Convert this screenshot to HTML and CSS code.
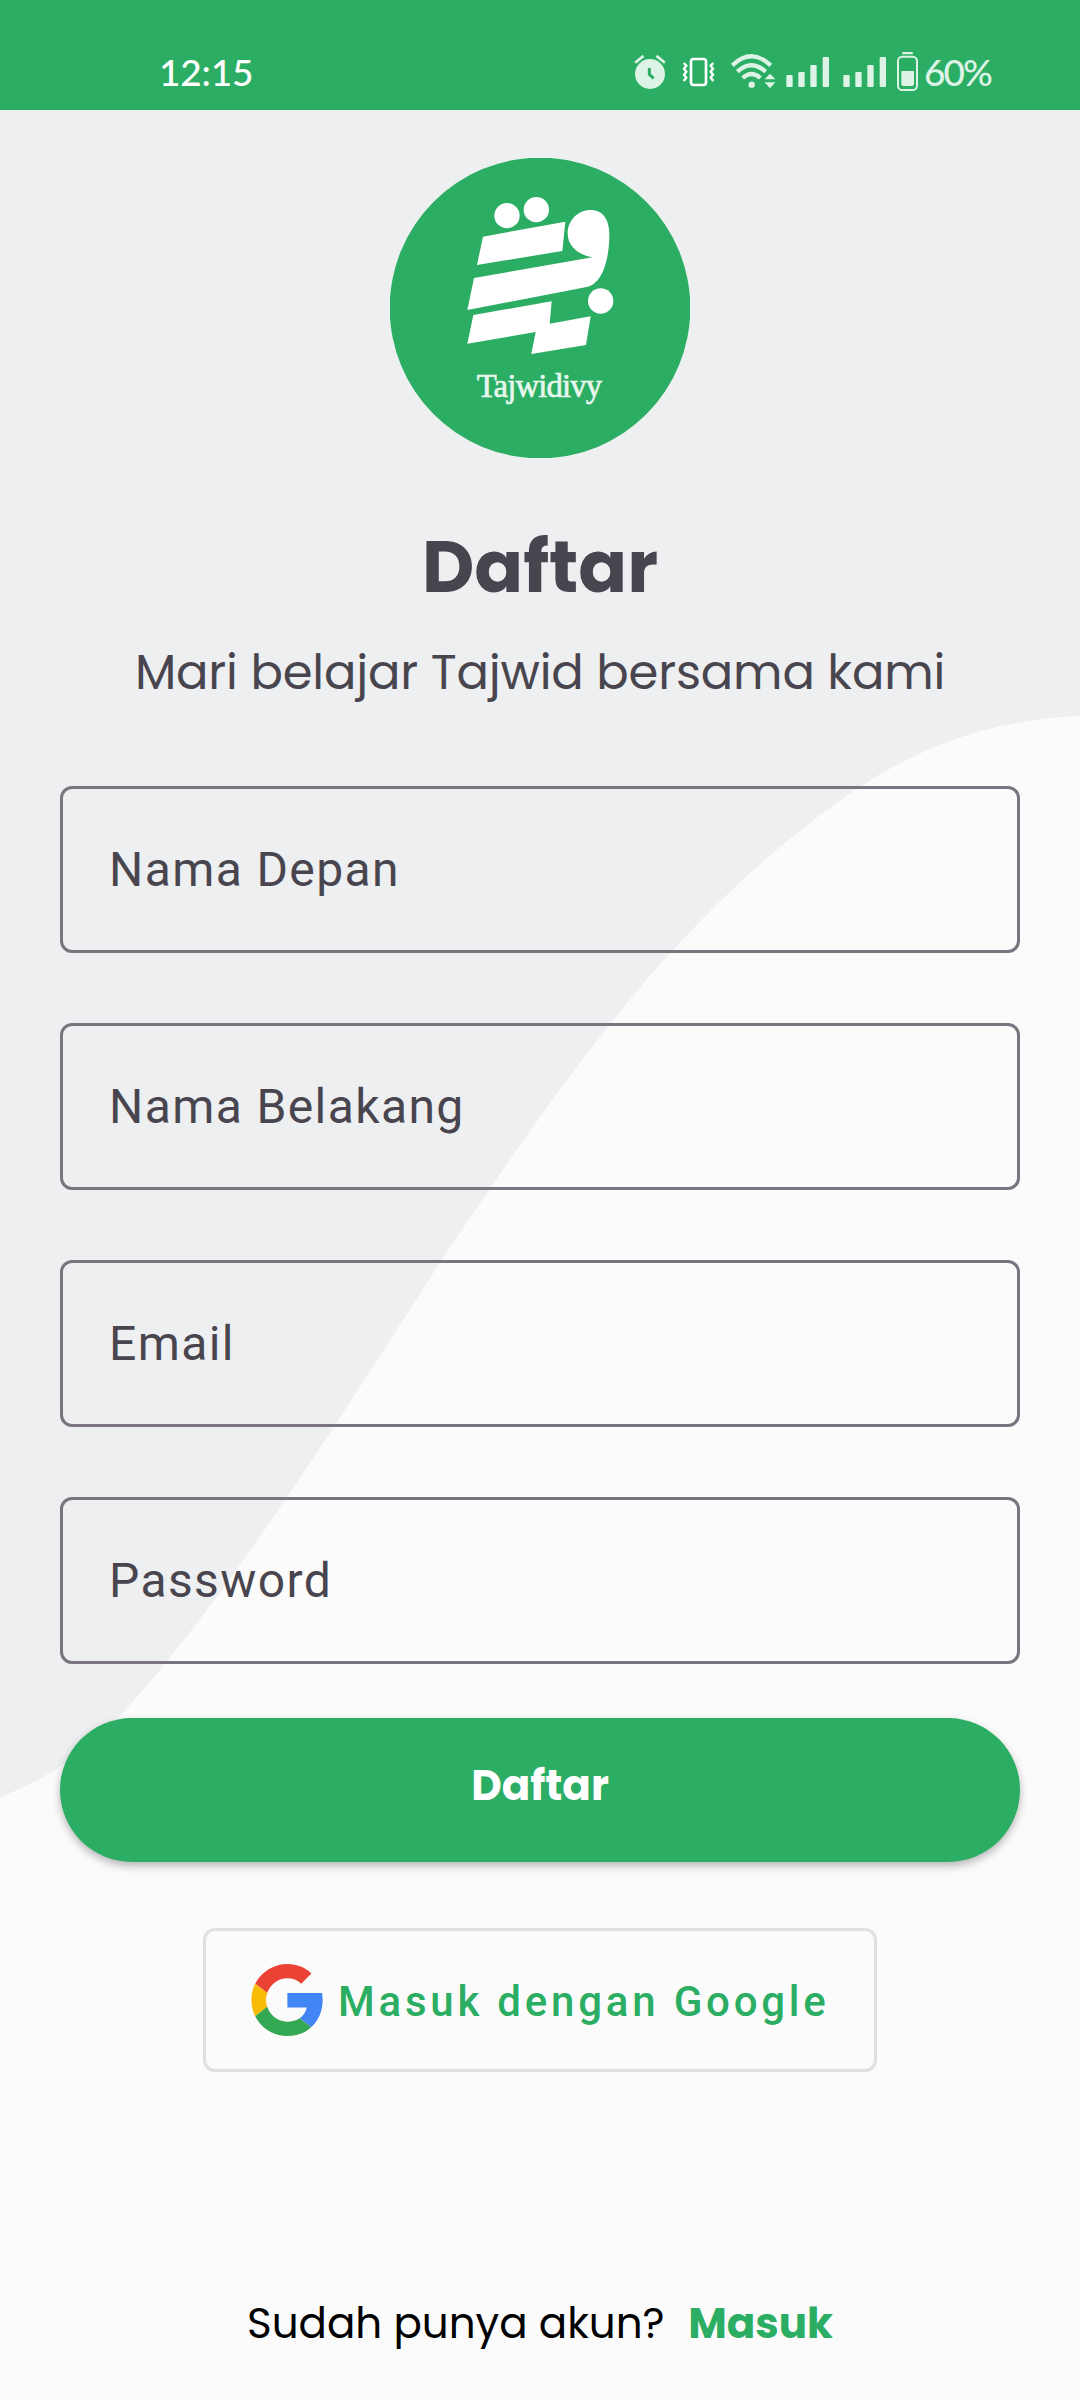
FILE: index.html
```html
<!DOCTYPE html>
<html lang="id">
<head>
<meta charset="utf-8">
<title>Daftar - Tajwidivy</title>
<link rel="stylesheet" href="styles.css">
</head>
<body>
<header class="status">
  <span class="time">12:15</span>
  <div class="status-icons">
    <svg class="alarm" viewBox="42 36 96 117" fill="#dcf3e6"><circle cx="90" cy="102" r="45"/><path d="M43 65L68 44l5 7-25 20zM137 65l-25-21-5 7 25 20z"/><path d="M88 84v19l13 12" fill="none" stroke="#2bae63" stroke-width="9"/></svg>
    <svg class="vibrate" viewBox="186 36 99 117" fill="none" stroke="#fff"><rect x="213" y="57" width="45" height="78" rx="8" stroke-width="8"/><path d="M191 69l8 8-7 9 7 9-7 9 7 9-8 10M280 69l-8 8 7 9-7 9 7 9-7 9 8 10" stroke-width="7"/></svg>
    <svg class="wifi" viewBox="330 36 138 117" fill="none" stroke="#dcf3e6" stroke-width="13"><path d="M337 76Q394 22 452 76M352 95Q394 56 437 95M368 114Q394 90 421 114"/><circle cx="395" cy="134" r="9.500" fill="#dcf3e6" stroke="none"/><path d="M434 118l16-17 16 17zM434 127l16 18 16-18z" fill="#dcf3e6" stroke="none"/></svg>
    <svg class="signal" viewBox="498 36 132 117" fill="#dcf3e6"><rect x="499" y="105" width="19" height="36" rx="3"/><rect x="535" y="96" width="19" height="45" rx="3"/><rect x="571" y="75" width="19" height="66" rx="3"/><rect x="608" y="51" width="19" height="90" rx="3"/></svg>
    <svg class="signal second" viewBox="498 36 132 117" fill="#dcf3e6"><rect x="499" y="105" width="19" height="36" rx="3"/><rect x="535" y="96" width="19" height="45" rx="3"/><rect x="571" y="75" width="19" height="66" rx="3"/><rect x="608" y="51" width="19" height="90" rx="3"/></svg>
    <svg class="battery" viewBox="828 36 69 117" fill="#dcf3e6"><rect x="846" y="36" width="33" height="7" rx="3"/><rect x="834" y="50" width="57" height="100" rx="13" fill="none" stroke="#dcf3e6" stroke-width="6"/><path d="M844 93h38v39q0 6-6 6h-26q-6 0-6-6z"/></svg>
    <span class="percent">60%</span>
  </div>
</header>
<main class="screen">
  <svg class="backdrop" viewBox="0 110 1080 2290"><path d="M0 110H1080V716C1005 718 930 741 861 786C795 830 732 886 671 952C590 1042 515 1150 441 1261C330 1433 225 1602 118 1718C85 1754 45 1780 0 1797Z" fill="#edeff1"/></svg>
  <svg class="logo" viewBox="30 24 900 900">
    <circle cx="480" cy="474" r="451" fill="#2bae63"/>
    <g fill="#fff">
      <circle cx="381" cy="197" r="38"/><circle cx="469" cy="179" r="38"/><circle cx="662" cy="453" r="38"/>
      <path d="M309 260L556 215 547 303 291 345Z"/>
      <path d="M282 384L638 322C590 314 563 286 563 250C563 211 594 180 632 180C668 180 688 207 688 254C688 335 664 403 620 411L262 480Z"/>
      <path d="M280 495L515 454 509 521 632 499 618 585 454 612 467 546 262 581Z"/>
    </g>
    <text class="logo-text" x="290" y="742" textLength="376">Tajwidivy</text>
  </svg>
  <h1 class="title">Daftar</h1>
  <p class="subtitle">Mari belajar Tajwid bersama kami</p>
  <form class="form">
    <div class="field">Nama Depan</div>
    <div class="field">Nama Belakang</div>
    <div class="field">Email</div>
    <div class="field">Password</div>
    <button class="submit" type="button">Daftar</button>
  </form>
  <button class="google" type="button">
    <svg class="google-icon" viewBox="0 0 47.500 48"><path fill="#ea4335" d="M24 9.500c3.540 0 6.710 1.220 9.210 3.600l6.850-6.850C35.900 2.380 30.470 0 24 0 14.620 0 6.510 5.380 2.560 13.220l7.980 6.190C12.430 13.720 17.740 9.500 24 9.500z"/><path fill="#4285f4" d="M47.500 24.550c0-1.570-.15-3.900-.38-5.200H24v9.670h12.940c-.58 2.960-2.260 5.480-4.780 7.180l7.730 6c4.510-4.180 7.610-10.360 7.610-17.650z"/><path fill="#fbbc05" d="M10.530 28.590c-.48-1.450-.76-2.990-.76-4.590s.27-3.140.76-4.590l-7.980-6.190C.92 16.460 0 20.120 0 24s.92 7.540 2.560 10.780l7.970-6.190z"/><path fill="#34a853" d="M24 48c6.480 0 11.930-2.130 15.890-5.810l-7.730-6c-2.150 1.450-4.920 2.300-8.160 2.300-6.260 0-11.570-4.220-13.470-9.910l-7.980 6.190C6.510 42.620 14.620 48 24 48z"/></svg>
    <span class="google-label">Masuk dengan Google</span>
  </button>
  <p class="login"><span class="question">Sudah punya akun?</span><a class="login-link">Masuk</a></p>
</main>
</body>
</html>
```
FILE: styles.css
```css
* { box-sizing: border-box; }
body { margin: 0; width: 1080px; height: 2400px; background: #fbfbfb; font-family: Poppins, Inter, sans-serif; color: #49454f; overflow: hidden; }
.status { height: 110px; padding: 0 88px 0 159px; background: #2bae63; color: #fff; display: flex; justify-content: space-between; align-items: flex-start; font-family: Lato, sans-serif; }
.time { margin-top: 49px; font-size: 37px; line-height: 46px; font-weight: 500; letter-spacing: -0.2px; }
.status-icons { display: flex; align-items: flex-start; padding-top: 52px; color: #dcf3e6; }
.status-icons svg { height: 39px; }
.alarm { width: 32px; }
.vibrate { width: 33px; margin-left: 16px; }
.wifi { width: 46px; margin-left: 15px; }
.signal { width: 44px; margin-left: 10px; }
.second { margin-left: 13px; }
.battery { width: 23px; margin-left: 9px; }
.percent { width: 68px; margin-left: 5px; margin-top: -3px; font-size: 37px; line-height: 46px; font-weight: 500; letter-spacing: -1.9px; white-space: nowrap; }
.screen { position: relative; height: 2290px; padding-top: 48px; display: flex; flex-direction: column; align-items: center; }
.screen > * { position: relative; flex-shrink: 0; }
.screen > .backdrop { position: absolute; left: 0; top: 0; width: 1080px; height: 2290px; }
.logo { width: 300px; height: 300px; }
.logo-text { font-family: "Liberation Serif", serif; font-size: 98px; fill: #e8f7ee; stroke: #e8f7ee; stroke-width: 2px; }
.title { margin: 59px 0 0; font-size: 72px; line-height: 100px; font-weight: 700; }
.subtitle { margin: 21px 0 0; font-size: 48px; line-height: 70px; letter-spacing: -0.16px; white-space: nowrap; }
.form { width: 960px; margin-top: 78px; display: flex; flex-direction: column; gap: 70px; }
.field { height: 167px; padding: 0 46px; border: 3px solid #79747e; border-radius: 12px; font: 48px/161px Roboto, sans-serif; letter-spacing: 1.4px; }
.submit { height: 144px; margin-top: -16px; padding: 0 0 9px; border: 0; border-radius: 72px; background: #2bae63; color: #fff; font: 700 42px Poppins, Inter, sans-serif; box-shadow: 0 4px 8px rgba(0, 0, 0, 0.28); }
.google { width: 674px; height: 144px; margin-top: 66px; padding: 0 0 0 45px; border: 3px solid #e0e0e2; border-radius: 12px; background: transparent; display: flex; align-items: center; gap: 15px; }
.google-icon { width: 72px; height: 72px; }
.google-label { padding-top: 2px; color: #2bae63; font: 500 42px Roboto, sans-serif; letter-spacing: 3.78px; white-space: nowrap; }
.login { width: 586px; margin: 217px 0 0; display: flex; justify-content: space-between; line-height: 70px; font-size: 42px; white-space: nowrap; }
.question { color: #000; }
.login-link { color: #2bae63; font-weight: 700; }
```
